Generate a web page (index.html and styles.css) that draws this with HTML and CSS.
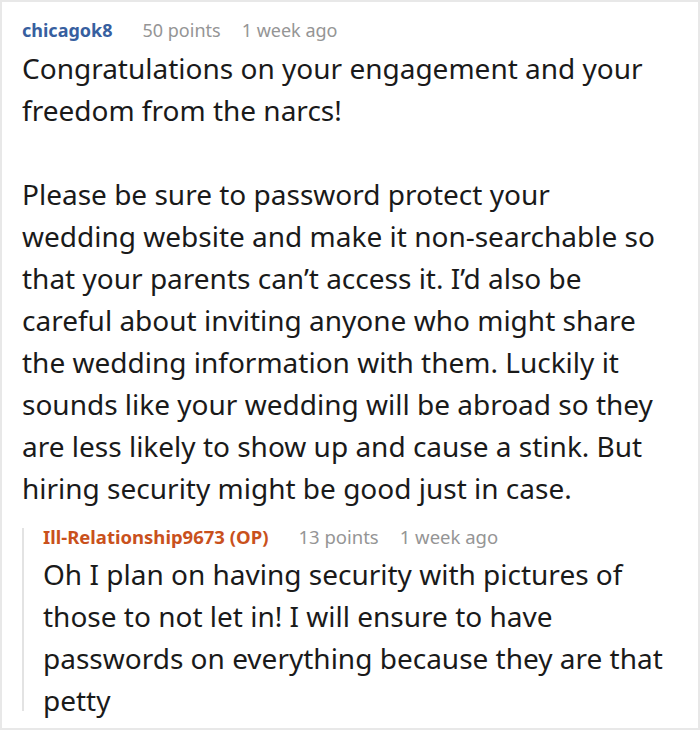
FILE: index.html
```html
<!DOCTYPE html>
<html>
<head>
<meta charset="utf-8">
<link rel="stylesheet" href="styles.css">
</head>
<body>
<div class="card">
  <div class="comment">
    <div class="meta">
      <span class="author">chicagok8</span>
      <span class="points">50 points</span>
      <span class="time">1 week ago</span>
    </div>
    <div class="body">
      <p>Congratulations on your engagement and your freedom from the narcs!</p>
      <p>Please be sure to password protect your wedding website and make it non-searchable so that your parents can’t access it. I’d also be careful about inviting anyone who might share the wedding information with them. Luckily it sounds like your wedding will be abroad so they are less likely to show up and cause a stink. But hiring security might be good just in case.</p>
    </div>
    <div class="reply">
      <div class="meta">
        <span class="author op">Ill-Relationship9673 (OP)</span>
        <span class="points">13 points</span>
        <span class="time">1 week ago</span>
      </div>
      <div class="body">
        <p>Oh I plan on having security with pictures of those to not let in! I will ensure to have passwords on everything because they are that petty</p>
      </div>
    </div>
  </div>
</div>
</body>
</html>
```

FILE: styles.css
```css
html, body {
  margin: 0;
  padding: 0;
  background: #fff;
}
.card {
  width: 700px;
  height: 730px;
  box-sizing: border-box;
  border: 2px solid #e8e8e8;
  overflow: hidden;
  font-family: "Noto Sans", "Open Sans", sans-serif;
}
.comment {
  padding: 16px 36px 0 20px;
}
.meta {
  display: flex;
  font-size: 18px;
  line-height: 24px;
  color: #959595;
  white-space: nowrap;
}
.author {
  font-weight: bold;
  color: #375f9f;
  margin-right: 30px;
}
.points {
  margin-right: 21px;
}
.body {
  color: #1a1a1a;
  font-size: 28px;
  line-height: 42px;
  margin-top: 5px;
}
.body p {
  margin: 0 0 42px 0;
}
.body p:last-child {
  margin-bottom: 0;
}
.reply {
  position: relative;
  margin-top: 16px;
  margin-right: -12px;
  padding-left: 21px;
}
.reply::before {
  content: "";
  position: absolute;
  left: 0;
  top: 3px;
  bottom: 10px;
  width: 2px;
  background: #e3e3e3;
}
.reply .meta {
  font-size: 18.5px;
}
.reply .body {
  margin-top: 4px;
}
.author.op {
  color: #c9511c;
}
```
